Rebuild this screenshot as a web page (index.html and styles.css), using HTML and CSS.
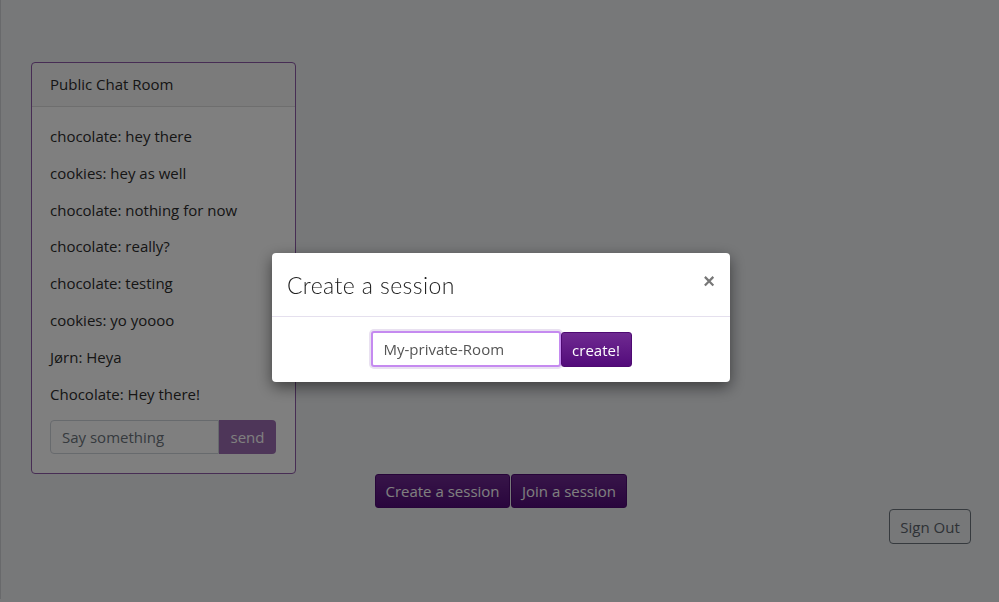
FILE: index.html
```html
<!DOCTYPE html>
<html>
<head>
<meta charset="utf-8">
<link rel="stylesheet" href="styles.css">
</head>
<body>
<div class="page">
  <div class="chat-card">
    <div class="chat-header">Public Chat Room</div>
    <div class="chat-body">
      <p class="msg">chocolate: hey there</p>
      <p class="msg">cookies: hey as well</p>
      <p class="msg">chocolate: nothing for now</p>
      <p class="msg">chocolate: really?</p>
      <p class="msg">chocolate: testing</p>
      <p class="msg">cookies: yo yoooo</p>
      <p class="msg">Jørn: Heya</p>
      <p class="msg">Chocolate: Hey there!</p>
      <div class="send-row">
        <input class="say" type="text" placeholder="Say something">
        <button class="send-btn">send</button>
      </div>
    </div>
  </div>
  <div class="session-row">
    <button class="btn-purple btn-create">Create a session</button>
    <button class="btn-purple btn-join">Join a session</button>
  </div>
  <div class="signout-row">
    <button class="signout">Sign Out</button>
  </div>
</div>
<div class="backdrop"></div>
<div class="modal-wrap">
  <div class="modal">
    <div class="modal-header">
      <h4 class="modal-title">Create a session</h4>
      <span class="close">×</span>
    </div>
    <div class="modal-body">
      <input class="room" type="text" value="My-private-Room">
      <button class="btn-purple create-btn">create!</button>
    </div>
  </div>
</div>
</body>
</html>
```
FILE: styles.css
```css
html, body {
  margin: 0;
  padding: 0;
  height: 100%;
}
body {
  background: #eef0f3;
  font-family: "Open Sans", "Liberation Sans", sans-serif;
  color: #2c2c2c;
  overflow: hidden;
}
.page {
  padding: 62px 28px 0 30px;
  box-sizing: border-box;
  height: 100%;
  border-top: 3px solid #d8dadf;
  border-left: 1px solid #d0d2d6;
  margin-top: -3px;
}
.chat-card {
  width: 265px;
  box-sizing: border-box;
  border: 1px solid #8e5aa8;
  border-radius: 4px;
  background: #fff;
}
.chat-header {
  height: 44px;
  box-sizing: border-box;
  padding: 11px 18px 0;
  font-size: 15px;
  background: rgba(0,0,0,.03);
  border-bottom: 1px solid rgba(0,0,0,.1);
}
.chat-body {
  padding: 19px 18px 19px;
}
.msg {
  margin: 0 0 15.8px;
  font-size: 15px;
  line-height: 21px;
}
.send-row {
  display: flex;
  margin-top: 15px;
}
.say {
  width: 169px;
  height: 34px;
  box-sizing: border-box;
  border: 1px solid #ced4da;
  border-radius: 4px 0 0 4px;
  padding: 0 11px;
  font-family: inherit;
  font-size: 15px;
  color: #495057;
}
.say::placeholder { color: #6c757d; }
.send-btn {
  width: 57px;
  height: 34px;
  border: none;
  border-radius: 0 4px 4px 0;
  background: #6a1f8a;
  opacity: .65;
  color: #fff;
  font-family: inherit;
  font-size: 15px;
  padding: 0;
}
.session-row {
  display: flex;
  justify-content: center;
  gap: 1px;
  margin-top: 0;
}
.btn-purple {
  height: 34px;
  border: 1px solid #4e0a72;
  border-radius: 3px;
  background: linear-gradient(#6f2a91, #530b7b);
  color: #fff;
  font-family: inherit;
  font-size: 15px;
  padding: 0;
  white-space: nowrap;
}
.btn-create { width: 135px; }
.btn-join { width: 116px; }
.signout-row {
  display: flex;
  justify-content: flex-end;
  margin-top: 1px;
}
.signout {
  height: 35px;
  width: 82px;
  border: 1px solid #6c757d;
  border-radius: 4px;
  background: transparent;
  color: #5c646c;
  font-family: inherit;
  font-size: 15px;
  padding: 0;
}
.backdrop {
  position: fixed;
  inset: 0;
  background: rgba(0,0,0,.5);
}
.modal-wrap {
  position: fixed;
  inset: 0;
  display: flex;
  justify-content: center;
  align-items: flex-start;
  padding-top: 253px;
  padding-left: 3px;
}
.modal {
  width: 458px;
  background: #fff;
  border-radius: 4px;
  box-shadow: 0 5px 15px rgba(0,0,0,.5);
}
.modal-header {
  display: flex;
  justify-content: space-between;
  align-items: flex-start;
  height: 64px;
  box-sizing: border-box;
  padding: 18px 15px 0;
  border-bottom: 1px solid #e5e0ee;
}
.modal-title {
  margin: 0;
  font-family: "Lato", "Open Sans", sans-serif;
  font-weight: 300;
  font-size: 23px;
  letter-spacing: 0.4px;
  color: #222;
}
.close {
  font-family: "Liberation Sans", Arial, sans-serif;
  font-weight: 700;
  font-size: 20px;
  color: #777;
  line-height: 20px;
}
.modal-body {
  display: flex;
  justify-content: center;
  padding: 14px 0 15px;
}
.room {
  width: 190px;
  height: 36px;
  box-sizing: border-box;
  border: 2px solid #c58af0;
  border-radius: 3px;
  box-shadow: 0 0 0 2px #e9e1f1;
  padding: 0 11px;
  font-family: inherit;
  font-size: 15px;
  color: #555;
  outline: none;
}
.create-btn {
  width: 71px;
  height: 35px;
  padding: 0;
  margin-top: 1px;
}
```
